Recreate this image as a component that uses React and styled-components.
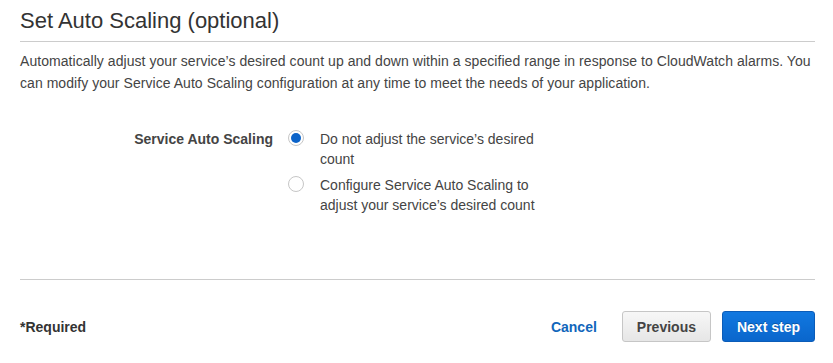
import React, { useState } from "react";
import styled, { createGlobalStyle } from "styled-components";

const Global = createGlobalStyle`
  html, body { margin: 0; padding: 0; background: #fff; }
  body { font-family: "Liberation Sans", Arial, Helvetica, sans-serif; color: #444; }
  * { box-sizing: border-box; }
`;

const Page = styled.div`
  width: 833px;
  height: 363px;
  padding: 0 18px 0 20px;
  display: flex;
  flex-direction: column;
`;

const Title = styled.h2`
  margin: 0;
  padding: 9px 0 8px;
  font-size: 22px;
  line-height: 24px;
  font-weight: 400;
  color: #333;
  border-bottom: 1px solid #ccc;
`;

const Description = styled.p`
  margin: 8px 0 0;
  font-size: 14px;
  line-height: 22px;
  letter-spacing: 0.05px;
  color: #444;
`;

const FormRow = styled.div`
  display: grid;
  grid-template-columns: 253px auto;
  column-gap: 15px;
  margin-top: 35px;
`;

const FieldLabel = styled.div`
  text-align: right;
  font-weight: 700;
  font-size: 14px;
  line-height: 20px;
  color: #444;
`;

const Options = styled.div`
  display: flex;
  flex-direction: column;
  gap: 6px;
`;

const Option = styled.label`
  display: flex;
  align-items: flex-start;
  gap: 16px;
  cursor: pointer;
`;

const RadioCircle = styled.span`
  flex: none;
  width: 16px;
  height: 16px;
  margin-top: 1px;
  border-radius: 50%;
  border: 1px solid #c6c6c6;
  background: #fff;
  display: flex;
  align-items: center;
  justify-content: center;
  &::after {
    content: "";
    width: 10px;
    height: 10px;
    border-radius: 50%;
    background: ${(p) => (p.$checked ? "#0b63c9" : "transparent")};
  }
`;

const OptionText = styled.span`
  width: 240px;
  font-size: 14px;
  line-height: 20px;
  color: #444;
`;

const Divider = styled.hr`
  margin: 64px 0 0;
  border: 0;
  border-top: 1px solid #ccc;
`;

const Footer = styled.div`
  display: flex;
  align-items: center;
  margin-top: 31px;
`;

const Required = styled.span`
  font-weight: 700;
  font-size: 14px;
  color: #333;
  flex: 1;
`;

const LinkButton = styled.button`
  border: 0;
  background: none;
  padding: 0;
  margin-right: 25px;
  font-family: inherit;
  font-weight: 700;
  font-size: 14px;
  color: #1166bb;
  cursor: pointer;
`;

const Button = styled.button`
  height: 31px;
  padding: 0 14px;
  margin-left: ${(p) => (p.$primary ? "11px" : "0")};
  border-radius: 3px;
  font-family: inherit;
  font-weight: 700;
  font-size: 14px;
  cursor: pointer;
  border: 1px solid ${(p) => (p.$primary ? "#0b5cb8" : "#c6c6c6")};
  color: ${(p) => (p.$primary ? "#fff" : "#444")};
  background: ${(p) =>
    p.$primary
      ? "linear-gradient(#1178e0, #0a66cc)"
      : "linear-gradient(#f7f7f7, #e6e6e6)"};
  text-shadow: ${(p) => (p.$primary ? "0 -1px 0 rgba(0,0,0,0.25)" : "none")};
`;

const options = [
  "Do not adjust the service\u2019s desired count",
  "Configure Service Auto Scaling to adjust your service\u2019s desired count",
];

export default function App() {
  const [sel, setSel] = useState(0);
  return (
    <>
      <Global />
      <Page>
        <Title>Set Auto Scaling (optional)</Title>
        <Description>
          Automatically adjust your service’s desired count up and down within a
          specified range in response to CloudWatch alarms. You can modify your
          Service Auto Scaling configuration at any time to meet the needs of
          your application.
        </Description>
        <FormRow>
          <FieldLabel>Service Auto Scaling</FieldLabel>
          <Options>
            {options.map((o, i) => (
              <Option key={i} onClick={() => setSel(i)}>
                <RadioCircle $checked={sel === i} />
                <OptionText>{o}</OptionText>
              </Option>
            ))}
          </Options>
        </FormRow>
        <Divider />
        <Footer>
          <Required>*Required</Required>
          <LinkButton>Cancel</LinkButton>
          <Button>Previous</Button>
          <Button $primary>Next step</Button>
        </Footer>
      </Page>
    </>
  );
}
